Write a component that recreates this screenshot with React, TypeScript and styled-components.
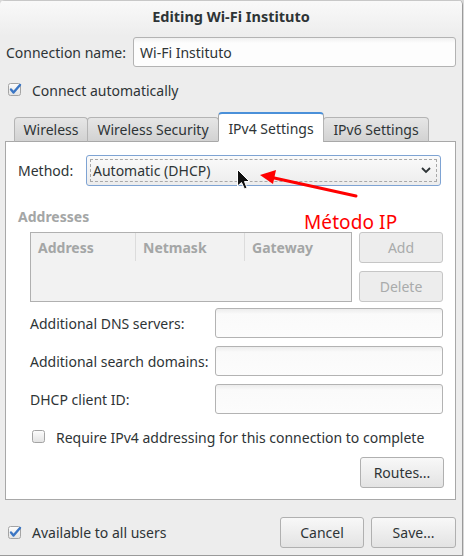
import React from "react";
import styled, { createGlobalStyle } from "styled-components";

const Global = createGlobalStyle`
  html, body { margin: 0; padding: 0; background: #d8d8d8; }
  body { font-family: "Noto Sans", "DejaVu Sans", sans-serif; font-size: 14px; color: #2e3436; }
  * { box-sizing: border-box; }
`;

const Window = styled.div`
  position: relative;
  width: 463px;
  height: 556px;
  background: #ededed;
  border-right: 1px solid #9a9a9a;
  border-bottom: 1px solid #9a9a9a;
  border-radius: 5px 5px 0 0;
  display: flex;
  flex-direction: column;
  overflow: hidden;
`;

const TitleBar = styled.div`
  height: 36px;
  flex: none;
  display: flex;
  align-items: center;
  justify-content: center;
  font-weight: bold;
  font-size: 14.5px;
  background: linear-gradient(#f9f9f9, #ededed);
  border-top: 1px solid #c8c8c8;
  padding-bottom: 5px;
`;

const Body = styled.div`
  flex: 1;
  display: flex;
  flex-direction: column;
  padding: 1px 6px 0 5px;
`;

const NameRow = styled.div`
  display: flex;
  align-items: center;
  height: 30px;
  padding-left: 1px;
`;

const NameLabel = styled.span`
  width: 127px;
  flex: none;
`;

const Entry = styled.div<{ $w?: number }>`
  height: 30px;
  width: ${(p) => (p.$w ? `${p.$w}px` : "auto")};
  flex: ${(p) => (p.$w ? "none" : "1")};
  border: 1px solid #b3b3b3;
  border-radius: 3px;
  background: linear-gradient(#ececec, #fafafa 5px, #fcfcfc);
  display: flex;
  align-items: center;
  padding: 0 6px;
`;

const CheckRow = styled.label<{ $ml?: number; $mt?: number }>`
  display: flex;
  align-items: center;
  gap: 10px;
  margin-left: ${(p) => p.$ml ?? 3}px;
  margin-top: ${(p) => p.$mt ?? 0}px;
  height: 16px;
`;

const Tabs = styled.div`
  display: flex;
  align-items: flex-end;
  margin-top: 14px;
  padding-left: 10px;
  height: 30px;
  position: relative;
  z-index: 1;
  margin-bottom: -1px;
`;

const Tab = styled.div<{ $active?: boolean; $w: number }>`
  width: ${(p) => p.$w}px;
  height: ${(p) => (p.$active ? 30 : 25)}px;
  display: flex;
  align-items: center;
  justify-content: center;
  padding-top: ${(p) => (p.$active ? 2 : 0)}px;
  border: 1px solid ${(p) => (p.$active ? "#a8a8a8" : "#b4b4b4")};
  border-top: ${(p) => (p.$active ? "2px solid #4a90d9" : "1px solid #b4b4b4")};
  border-bottom: ${(p) => (p.$active ? "1px solid #ffffff" : "1px solid #a8a8a8")};
  border-radius: 4px 4px 0 0;
  background: ${(p) => (p.$active ? "#ffffff" : "linear-gradient(#e6e6e6, #d2d2d2)")};
  margin-left: -1px;
  white-space: nowrap;
`;

const Panel = styled.div`
  background: #ffffff;
  border: 1px solid #a8a8a8;
  width: 451px;
  height: 359px;
  padding: 13px 14px 0 12px;
  display: flex;
  flex-direction: column;
`;

const MethodRow = styled.div`
  display: flex;
  align-items: center;
  height: 30px;
`;

const MethodLabel = styled.span`
  width: 68px;
  flex: none;
`;

const Combo = styled.div`
  flex: 1;
  height: 31px;
  border: 1px solid #7ea3d3;
  border-radius: 3px;
  background: linear-gradient(#fbfbfb, #ececec);
  padding: 3px;
`;

const ComboInner = styled.div`
  height: 100%;
  border: 1px dashed #a8a8a8;
  display: flex;
  align-items: center;
  justify-content: space-between;
  padding: 0 4px 0 2px;
`;

const SectionHead = styled.div`
  font-weight: bold;
  color: #a4a6a6;
  margin-top: 23px;
  height: 18px;
  line-height: 18px;
`;

const AddrRow = styled.div`
  display: flex;
  gap: 7px;
  margin-top: 6px;
  padding-left: 12px;
  margin-right: -3px;
`;

const Tree = styled.div`
  width: 322px;
  height: 70px;
  border: 1px solid #b0b0b0;
  background: #f2f2f2;
`;

const TreeHead = styled.div`
  display: grid;
  grid-template-columns: 104px 109px 1fr;
  height: 28px;
`;

const TreeCol = styled.div<{ $sep?: boolean }>`
  font-weight: bold;
  color: #a4a6a6;
  padding-left: 7px;
  display: flex;
  align-items: center;
  border-left: ${(p) => (p.$sep ? "1px solid #dcdcdc" : "none")};
`;

const BtnCol = styled.div`
  display: flex;
  flex-direction: column;
  gap: 8px;
`;

const Button = styled.div<{ $w?: number; $disabled?: boolean }>`
  width: ${(p) => p.$w ?? 84}px;
  height: 31px;
  border: 1px solid ${(p) => (p.$disabled ? "#c6c6c6" : "#b0b0b0")};
  border-radius: 3px;
  background: ${(p) =>
    p.$disabled ? "#ededed" : "linear-gradient(#f8f8f8, #e3e3e3)"};
  color: ${(p) => (p.$disabled ? "#a9abab" : "#2e3436")};
  display: flex;
  align-items: center;
  justify-content: center;
`;

const FormGrid = styled.div`
  display: grid;
  grid-template-columns: 185px 228px;
  row-gap: 8px;
  margin-top: 6px;
  padding-left: 12px;
  margin-right: -3px;
`;

const FormLabel = styled.div`
  display: flex;
  align-items: center;
`;

const RoutesRow = styled.div`
  display: flex;
  justify-content: flex-end;
  margin-top: 12px;
  margin-right: -3px;
`;

const Footer = styled.div`
  display: flex;
  align-items: center;
  margin-top: 17px;
  height: 31px;
`;

const Spacer = styled.div`
  flex: 1;
`;

const FooterBtns = styled.div`
  display: flex;
  gap: 7px;
`;

const Overlay = styled.svg`
  position: absolute;
  left: 0;
  top: 0;
  pointer-events: none;
`;

const Note = styled.div`
  position: absolute;
  left: 304px;
  top: 209px;
  color: #ff0000;
  font-size: 19px;
  line-height: 26px;
  letter-spacing: 0.1px;
`;

const CheckBox: React.FC<{ checked?: boolean }> = ({ checked }) => (
  <svg width="14" height="14" viewBox="0 0 14 14">
    <defs>
      <linearGradient id="cbg" x1="0" y1="0" x2="0" y2="1">
        <stop offset="0" stopColor="#fdfdfd" />
        <stop offset="1" stopColor="#e2e2e2" />
      </linearGradient>
    </defs>
    <rect x="0.5" y="0.5" width="12" height="12" rx="2" fill="url(#cbg)" stroke="#a4a4a4" />
    {checked && (
      <path
        d="M3 6.5 L5.5 9.5 L12 2"
        fill="none"
        stroke="#3b76c4"
        strokeWidth="2.4"
        strokeLinecap="round"
        strokeLinejoin="round"
      />
    )}
  </svg>
);

const Chevron = () => (
  <svg width="12" height="8" viewBox="0 0 12 8">
    <path d="M2 2 L6 6 L10 2" fill="none" stroke="#2e3436" strokeWidth="1.8" />
  </svg>
);

export default function App() {
  return (
    <>
      <Global />
      <Window>
        <TitleBar>Editing Wi-Fi Instituto</TitleBar>
        <Body>
          <NameRow>
            <NameLabel>Connection name:</NameLabel>
            <Entry style={{ background: "linear-gradient(#f0f0f0, #fdfdfd 5px, #fdfdfd)" }}>
              Wi-Fi Instituto
            </Entry>
          </NameRow>
          <CheckRow $mt={15}>
            <CheckBox checked />
            <span>Connect automatically</span>
          </CheckRow>
          <Tabs>
            <Tab $w={74}>Wireless</Tab>
            <Tab $w={132}>Wireless Security</Tab>
            <Tab $w={106} $active>IPv4 Settings</Tab>
            <Tab $w={106}>IPv6 Settings</Tab>
          </Tabs>
          <Panel>
            <MethodRow>
              <MethodLabel>Method:</MethodLabel>
              <Combo>
                <ComboInner>
                  <span>Automatic (DHCP)</span>
                  <Chevron />
                </ComboInner>
              </Combo>
            </MethodRow>
            <SectionHead>Addresses</SectionHead>
            <AddrRow>
              <Tree>
                <TreeHead>
                  <TreeCol>Address</TreeCol>
                  <TreeCol $sep>Netmask</TreeCol>
                  <TreeCol $sep>Gateway</TreeCol>
                </TreeHead>
              </Tree>
              <BtnCol>
                <Button $disabled>Add</Button>
                <Button $disabled>Delete</Button>
              </BtnCol>
            </AddrRow>
            <FormGrid>
              <FormLabel>Additional DNS servers:</FormLabel>
              <Entry $w={228} />
              <FormLabel>Additional search domains:</FormLabel>
              <Entry $w={228} />
              <FormLabel>DHCP client ID:</FormLabel>
              <Entry $w={228} />
            </FormGrid>
            <CheckRow $ml={14} $mt={15}>
              <CheckBox />
              <span>Require IPv4 addressing for this connection to complete</span>
            </CheckRow>
            <RoutesRow>
              <Button>Routes...</Button>
            </RoutesRow>
          </Panel>
          <Footer>
            <CheckRow>
              <CheckBox checked />
              <span>Available to all users</span>
            </CheckRow>
            <Spacer />
            <FooterBtns>
              <Button $w={84}>Cancel</Button>
              <Button $w={85}>Save...</Button>
            </FooterBtns>
          </Footer>
        </Body>
        <Overlay width="463" height="556" viewBox="0 0 463 556">
          <line x1="356" y1="196" x2="272" y2="177.5" stroke="#ff0000" strokeWidth="3" strokeLinecap="round" />
          <path d="M260 175 L276 170 L273 184 Z" fill="#ff0000" />
          <path
            d="M237.5 169.5 L237.5 186 L241.5 182.5 L244.5 189 L247 188 L244.5 181.5 L249.5 181.5 Z"
            fill="#111"
            stroke="#ffffff"
            strokeWidth="1"
            strokeLinejoin="round"
          />
        </Overlay>
        <Note>Método IP</Note>
      </Window>
    </>
  );
}
